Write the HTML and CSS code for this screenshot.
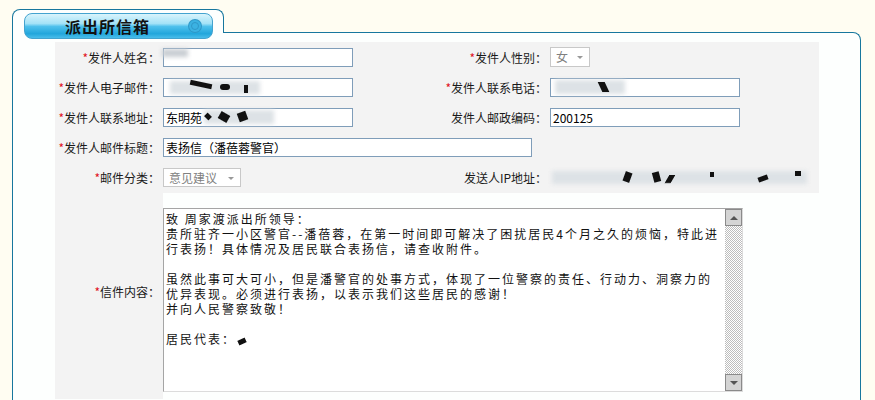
FILE: index.html
```html
<!DOCTYPE html>
<html lang="zh-CN">
<head>
  <meta charset="UTF-8">
  <title>派出所信箱</title>
  <link rel="stylesheet" href="styles.css">
</head>
<body>
  <div class="mailbox">
    <div class="tab">
      <div class="pill">
        <span class="pill-title">派出所信箱</span>
        <span class="pill-ring"></span>
      </div>
    </div>
    <div class="panel">
      <div class="form">
        <div class="row">
          <div class="label"><i>*</i>发件人姓名：</div>
          <div class="field"><div class="input"><span class="haze h-name"></span></div></div>
          <div class="label"><i>*</i>发件人性别：</div>
          <div class="field"><div class="select sel-sex">女<b class="caret"></b></div></div>
        </div>
        <div class="row">
          <div class="label"><i>*</i>发件人电子邮件：</div>
          <div class="field">
            <div class="input">
              <span class="haze h-mail"></span>
              <span class="blot m1"></span><span class="blot m2"></span><span class="blot m3"></span>
            </div>
          </div>
          <div class="label"><i>*</i>发件人联系电话：</div>
          <div class="field">
            <div class="input">
              <span class="haze h-phone"></span><span class="blot p1"></span>
            </div>
          </div>
        </div>
        <div class="row">
          <div class="label"><i>*</i>发件人联系地址：</div>
          <div class="field">
            <div class="input">东明苑
              <span class="haze h-addr"></span>
              <span class="blot a1"></span><span class="blot a2"></span><span class="blot a3"></span>
            </div>
          </div>
          <div class="label">发件人邮政编码：</div>
          <div class="field"><div class="input">200125</div></div>
        </div>
        <div class="row">
          <div class="label"><i>*</i>发件人邮件标题：</div>
          <div class="field wide"><div class="input title">表扬信（潘蓓蓉警官）</div></div>
        </div>
        <div class="row last">
          <div class="label"><i>*</i>邮件分类：</div>
          <div class="field"><div class="select sel-type">意见建议<b class="caret"></b></div></div>
          <div class="label">发送人IP地址：</div>
          <div class="field">
            <div class="ip">
              <span class="haze h-ip"></span>
              <span class="blot i1"></span><span class="blot i2"></span><span class="blot i3"></span>
              <span class="blot i4"></span><span class="blot i5"></span><span class="blot i6"></span>
            </div>
          </div>
        </div>
        <div class="row letter-row">
          <div class="label letter-label"><i>*</i>信件内容：</div>
          <div class="field letter-field">
            <div class="letter">
              <div class="letter-text">致 周家渡派出所领导：
贵所驻齐一小区警官--潘蓓蓉，在第一时间即可解决了困扰居民4个月之久的烦恼，特此进
行表扬！具体情况及居民联合表扬信，请查收附件。

虽然此事可大可小，但是潘警官的处事方式，体现了一位警察的责任、行动力、洞察力的
优异表现。必须进行表扬，以表示我们这些居民的感谢！
并向人民警察致敬！

居民代表：<span class="blot r1"></span></div>
              <div class="scrollbar">
                <span class="scroll-btn"><b class="arrow up"></b></span>
                <span class="scroll-track"></span>
                <span class="scroll-btn"><b class="arrow down"></b></span>
              </div>
            </div>
          </div>
        </div>
      </div>
    </div>
  </div>
</body>
</html>
```

FILE: styles.css
```css
body {
  margin: 0;
  background-color: #fffdf2;
  font-family: "Noto Sans CJK SC", "Liberation Sans", sans-serif;
  font-size: 12px;
  color: #222;
  height: 400px;
  overflow: hidden;
}

.mailbox {
  width: 849px;
  margin: 9px 0 0 12px;
}

/* tab on top of the panel */
.tab {
  position: relative;
  z-index: 1;
  width: 210px;
  height: 23px;
  margin-bottom: -1px;
  border: 1px solid #17779e;
  border-bottom: none;
  border-radius: 8px 8px 0 0;
  background-color: #fdfffe;
}

.pill {
  display: flex;
  align-items: center;
  box-sizing: border-box;
  width: 189px;
  height: 26px;
  margin: 3px 0 0 11px;
  padding-left: 40px;
  border: 1px solid #43a3cf;
  border-radius: 8px;
  background: linear-gradient(#d9f4fc 0%, #a3e2f7 40%, #4fc1ec 52%, #22a6dc 82%, #49bdea 100%);
}

.pill-title {
  font-size: 16px;
  font-weight: 700;
  letter-spacing: 1px;
  color: #111;
}

.pill-ring {
  width: 6px;
  height: 6px;
  margin-left: 41px;
  border-radius: 50%;
  border: 1px solid #2f98c8;
  box-shadow: 0 0 0 2px #3bb2e2, 0 0 0 3px #2f98c8;
  background: #3bb2e2;
}

.panel {
  box-sizing: border-box;
  height: 369px;
  padding: 9px 41px 0 42px;
  border: 1px solid #17779e;
  border-bottom: none;
  border-top-right-radius: 8px;
  background-color: #fdfffe;
  overflow: hidden;
}

/* form grid */
.row {
  display: grid;
  grid-template-columns: 108px 279px 108px 1fr;
  align-items: center;
  height: 30px;
  background-color: #f3f3f3;
}

.row.last {
  height: 31px;
}

.label {
  padding-right: 3px;
  text-align: right;
  white-space: nowrap;
  color: #1a1a1a;
}

.label i {
  font-style: normal;
  color: #e0141e;
}

.field.wide {
  grid-column: span 3;
}

.input {
  position: relative;
  box-sizing: border-box;
  width: 190px;
  height: 19px;
  padding: 0 2px;
  border: 1px solid #7f9db9;
  background-color: #fff;
  line-height: 17px;
  color: #000;
}

.input.title {
  width: 369px;
}

.select {
  position: relative;
  box-sizing: border-box;
  height: 20px;
  padding-left: 5px;
  border: 1px solid #c8c8c8;
  background-color: #fff;
  line-height: 18px;
  color: #808080;
}

.sel-sex {
  width: 40px;
}

.sel-type {
  width: 78px;
  height: 19px;
  line-height: 17px;
}

.caret {
  position: absolute;
  right: 6px;
  top: 8px;
  border-left: 3px solid transparent;
  border-right: 3px solid transparent;
  border-top: 3px solid #999;
}

.ip {
  position: relative;
  height: 18px;
}

/* redacted bits */
.haze,
.blot {
  position: absolute;
}

.haze {
  background-color: #dde2e6;
  filter: blur(2px);
}

.blot {
  background-color: #111;
  filter: blur(0.6px);
}

.h-name { left: -2px; top: 0; width: 26px; height: 8px; background-color: #c9ced3; }
.h-mail { left: 6px; top: 2px; width: 90px; height: 13px; }
.m1 { left: 26px; top: 3px; width: 22px; height: 5px; transform: rotate(12deg); }
.m2 { left: 56px; top: 5px; width: 10px; height: 6px; border-radius: 3px; }
.m3 { left: 80px; top: 6px; width: 4px; height: 8px; }
.h-addr { left: 40px; top: 1px; width: 70px; height: 14px; }
.a1 { left: 41px; top: 5px; width: 6px; height: 5px; transform: rotate(45deg); }
.a2 { left: 55px; top: 4px; width: 10px; height: 8px; transform: rotate(30deg); }
.a3 { left: 74px; top: 3px; width: 9px; height: 9px; transform: rotate(-20deg); }
.h-phone { left: 4px; top: 1px; width: 70px; height: 14px; }
.p1 { left: 49px; top: 3px; width: 7px; height: 10px; transform: skewX(25deg); }
.h-ip { left: 2px; top: 2px; width: 255px; height: 13px; }
.i1 { left: 74px; top: 3px; width: 7px; height: 10px; transform: rotate(20deg); }
.i2 { left: 103px; top: 3px; width: 7px; height: 10px; transform: rotate(-15deg); }
.i3 { left: 117px; top: 6px; width: 6px; height: 8px; transform: skewX(-30deg); }
.i4 { left: 160px; top: 3px; width: 4px; height: 5px; }
.i5 { left: 208px; top: 7px; width: 10px; height: 5px; transform: rotate(-20deg); }
.i6 { left: 245px; top: 2px; width: 6px; height: 5px; }

/* letter body */
.letter-row {
  grid-template-columns: 108px 1fr;
  align-items: start;
  height: 206px;
}

.letter-label {
  padding-top: 90px;
  line-height: 18px;
}

.letter-field {
  height: 206px;
  padding-top: 15px;
  box-sizing: border-box;
  background-color: #fdfffe;
}

.letter {
  display: flex;
  box-sizing: border-box;
  width: 580px;
  height: 184px;
  border: 1px solid #a5a5a5;
  border-bottom-color: #dcdcdc;
  border-right-color: #dcdcdc;
  background-color: #fff;
}

.letter-text {
  position: relative;
  flex: 1;
  padding: 2px 2px;
  white-space: pre;
  overflow: hidden;
  font-size: 12px;
  line-height: 15px;
  letter-spacing: 2px;
  color: #111;
}

.r1 {
  position: relative;
  display: inline-block;
  width: 8px;
  height: 5px;
  margin-left: 2px;
  transform: rotate(-25deg);
}

.scrollbar {
  display: flex;
  flex-direction: column;
  width: 17px;
}

.scroll-btn {
  display: flex;
  align-items: center;
  justify-content: center;
  box-sizing: border-box;
  height: 17px;
  border: 1px solid #8a8a8a;
  background-color: #d4d4d4;
}

.scroll-track {
  flex: 1;
  background: repeating-conic-gradient(#bdbdbd 0 25%, #fff 0 50%) 0 0 / 2px 2px;
}

.arrow {
  border-left: 4px solid transparent;
  border-right: 4px solid transparent;
}

.arrow.up {
  border-bottom: 4px solid #555;
}

.arrow.down {
  border-top: 4px solid #555;
}
```
